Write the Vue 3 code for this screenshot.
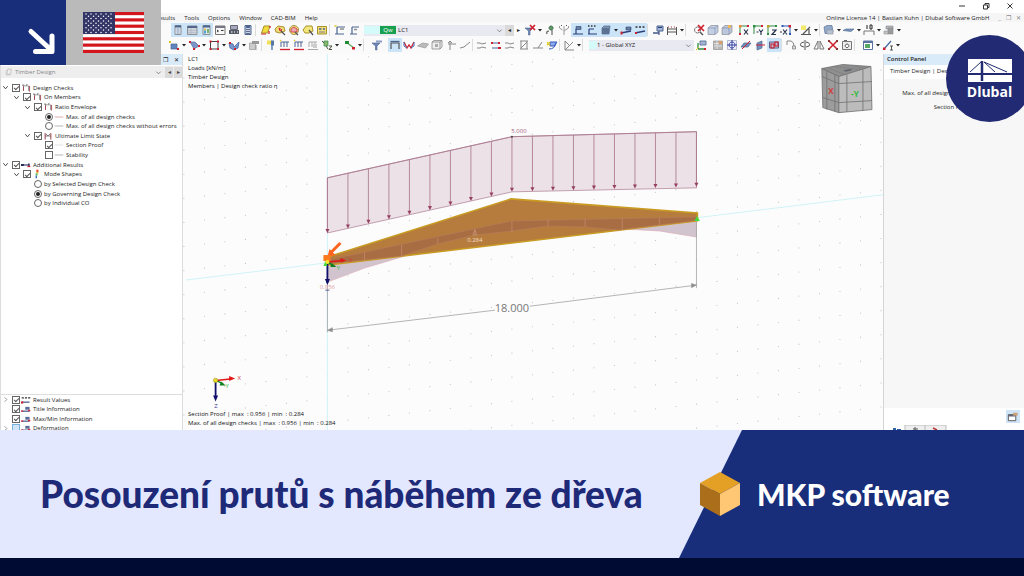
<script setup>
import { ref } from 'vue'

const B = '#4a6590'
const N = '#2b3f78'
const G = '#8b8f96'
const R = '#d02030'
const Y = '#f0dc3c'
const E = '#2f8f45'

// Each glyph is a list of [path, fill, stroke, stroke width] on a 14 x 14 grid.
const glyphs = {
  panel: [['M4 2.5h6v9H4z', '#e8edf4', G], ['M4 2.5h6v2H4z', B], ['M5.5 6h3M5.5 8h3M5.5 10h3', 'none', '#7d93b8']],
  table: [['M2.5 3h9.500v8.500h-9.500z', '#cfd4dc', G], ['M2.500 3h9.500v2h-9.500z', '#53658c'], ['M3 7.500h9M3 9.500h9M6 5v6', 'none', '#a9b0bd', .6]],
  palette: [['M4 2.5h7v9H4z', '#dfe8f2', G], ['M4 2.5h7v2H4z', B], ['M5 5.500h2v2H5z', '#e4c33c'], ['M5 7.500h2v3H5z', '#4ea1d8'], ['M8 6h2v4H8z', '#77b56c']],
  console: [['M2.500 3h9.500v8.500h-9.500z', '#f7f7f7', '#777'], ['M2.500 3h9.500v2h-9.500z', '#778'], ['M4 7l1.500 1L4 9M8 7.500h2.500', 'none', '#333']],
  printer: [['M3.500 2.500h7v4h-7z', '#a4a9bb', '#667'], ['M2 7h10v4H2z', '#555b66'], ['M4 9h1.500M7 9h1M10 9h1', 'none', '#fff']],
  calc: [['M4 2.500h6v9H4z', '#c9d3e4', B], ['M5 4h4', 'none', N, 1.500], ['M5 6.500h4M5 8.500h4M5 10.500h4', 'none', '#62708e']],
  surface: [['M5 3h6l-2.500 7H2.500z', Y, '#a9912b'], ['M2 11h5M10 8v3M11 3v2', 'none', R, 1.2]],
  region: [['M2 6l3-3 6 1 1 4-5 2-4-1z', '#f0df77', '#a9912b'], ['M6 5l3 2-2 1z', '#fff', R], ['M8 8l4 4', 'none', '#555', 1.300]],
  target: [['M7 2.500a4.500 4.500 0 1 0 .1 0z', '#f0df77', '#a58f52'], ['M4 6l3-2 3 2v3H4z', '#e7a9b3', R, .7], ['M8 9l3 3', 'none', '#555', 1.200]],
  lasso: [['M2 7l3-4h6l1 5-4 2H4z', '#f4e87c', '#a9912b'], ['M8 7l4 5', 'none', '#555', 1.300]],
  boxes: [['M2.500 3.500h9v7.500h-9z', '#f0df77', '#a9912b'], ['M4 5h2.500v2H4zM8 5h2v2H8zM4 8.500h6v1H4z', '#788094']],
  loadnew: [['M4 4h8M4 4v7M2 11h9', 'none', B, 1.200], ['M7 6h4', 'none', G, 1.500], ['M1.500 2l2 2M3.500 2l-2 2', 'none', '#e5c92f']],
  load: [['M5 4h7M5 4v7M3 11h7', 'none', B, 1.200], ['M7 6.500h3', 'none', G, 1.500]],
  filterx: [['M2 5h8L7 8v4H5.500V8z', '#6f86b8', B, .6], ['M7 2l5 5M12 2L7 7', 'none', R, 1.700]],
  person: [['M6 8q-3 0-2 3', 'none', '#555', 1.200], ['M8 3a2 2 0 1 0 .1 0z', '#5f9a68', '#44704e'], ['M9 7v5', 'none', '#667', 1.200]],
  branches: [['M2.500 3v2l3 2M7 3v9M11.500 3v2L7 8', 'none', '#999', 1], ['M4 2.500h1M9 2.500h1', 'none', '#555', 1.200]],
  result: [['M5 11V6M2 11h10', 'none', N, 1.200], ['M5 3.500h5v3H5z', '#68809e', N, .6]],
  values: [['M3 11h9M4 11V6M4 6h5', 'none', N, 1.200], ['M3 3h1.500M6 3h1.500M9 3h1.500', 'none', '#333', 1.500]],
  solid: [['M3 5l2-2h6l-1 8H3z', '#8196b0', B, .7], ['M3 5h7v6H3z', '#5c7292']],
  beam: [['M2 10l10-2', 'none', N, 1.500], ['M7 4h5v3H7z', '#68809e', N, .6], ['M1.500 8.500h2v3h-2z', R]],
  beamtext: [['M2 10l10-2', 'none', N, 1.400], ['M2.500 4h2M6 4h2M9.500 4h2', 'none', '#333', 1.500], ['M2 9h2v2H2z', R]],
  info: [['M2 10h6', 'none', N, 1.300], ['M6 3h6v5H6z', '#a6b6d6', B], ['M7 4.500h4M8 8v4', 'none', N]],
  frame: [['M2.500 4v8M11.500 4v8M2 6h10M2 9h10', 'none', '#555', 1], ['M3 4h1M6 4h1M9 4h1', 'none', '#a33']],
  searchx: [['M5.500 4a3 3 0 1 0 .1 0z', '#fff', '#777'], ['M8 9l3 3', 'none', '#555', 1.400], ['M6 2l6 6M12 2L6 8', 'none', R, 1.700]],
  cube: [['M2 5l3-2.500h7V9l-3 2.500H2z', '#c4cfe4', G, .7], ['M2 5h7v6.500M9 5l3-2.500', 'none', '#7f91b3', .7]],
  cubenew: [['M2 5l3-2.500h7V9l-3 2.500H2z', '#bdc7dc', G, .7], ['M2 5h7v6.500M9 5l3-2.500', 'none', '#7f91b3', .7], ['M8 2h3v3H8z', '#f0b75a']],
  viewx: [['M3 11V3h8', 'none', E, 1], ['M2 2h2.500v2.500H2z', '#f0852c'], ['M10 2h2v2h-2zM2 10h2v2H2z', R], ['M7 6.500l4 5M11 6.500l-4 5', 'none', '#26334a', 1.200]],
  viewy: [['M3 11V3h8', 'none', E, 1], ['M2 2h2.500v2.500H2z', E], ['M10 2h2v2h-2z', R], ['M5.500 9h2M8 6.500L10 9l2-2.500M10 9v3', 'none', '#26334a', 1.200]],
  viewz: [['M3 11V3h8', 'none', E, 1], ['M2 2h2.500v2.500H2z', '#c4a22a'], ['M10 2h2v2h-2zM2 10h2v2H2z', E], ['M7 7h4l-4 4.500h4', 'none', '#26334a', 1.200]],
  viewmx: [['M11 11V3H4', 'none', '#2a59b5', 1], ['M9.500 2H12v2.500H9.500z', R], ['M2.500 2h2v2h-2zM10 10h2v2h-2z', '#2a59b5'], ['M1 9h2M4 6.500l4 5M8 6.500l-4 5', 'none', '#26334a', 1.200]],
  axes: [['M2 2.500h5v4.500H2z', '#f3e96b'], ['M2 11.500h10M4 11l7-7M10 6v5', 'none', '#555', 1.200]],
  render: [['M2 4l3-1.500h5l1 6-2 2H3z', '#92a9c9', B, .6], ['M5 7h6v4H5z', '#b7c3d5', G, .6]],
  plate: [['M1 7.500l3-1.500h8L9 8.500z', '#7896bb', B, .6]],
  dim: [['M2 12V8h10v4', 'none', '#777', 1], ['M5 2v4M8 2h2v4H8z', 'none', '#222', 1]],
  gray: [['M4 3h7v3H4z', '#b6b6b6', G, .6], ['M6 5h5v6H6z', '#999', G, .6], ['M2 8h4v3H2z', '#c6c6c6', G, .6]],
  wand: [['M2 3l2 2M4 3L2 5', 'none', '#dfc21d', 1], ['M4 6h6v5H4z', '#6185c1', B, .7], ['M10 10h2v2h-2z', R]],
  nodes: [['M3 4h5l4 4-5 3z', '#7c94c8', B, .6], ['M2 3h2v2H2zM11 7h2v2h-2zM6 10h2v2H6z', R]],
  square: [['M3.500 3.500h7.500v7.500H3.500z', 'none', '#444', 1], ['M2.500 2.500h2v2h-2zM10 2.500h2v2h-2zM2.500 10h2v2h-2zM10 10h2v2h-2z', R]],
  curve: [['M2 5l4 1 1 3 5-5-1 6-4 2-4-2z', '#7896cb', '#4468a8', .8], ['M2 4h2v2H2zM7 10h2v2H7z', R]],
  copy: [['M2.500 5h6v6.500h-6z', '#ccc', '#999', .7], ['M5 3h7v3H5z', '#999'], ['M9 7v5', 'none', '#999']],
  pin: [['M8 5v7', 'none', '#4671b5', 1.300], ['M3 2.500h5v4H3z', '#f0df57'], ['M7 2.500h3v5H7z', '#5877a8']],
  fload: [['M3 4v5M6 4v5M9 4v5M3 4h8', 'none', B, 1], ['M2 11.500h10', 'none', R, 1.300], ['M2 2l1 1', 'none', '#dfc21d', 1.200]],
  gload: [['M3 4v5M6 4v5M9 4v5M3 4h8M2 11.500h10', 'none', '#aaa', 1], ['M7 6h4v4H7z', '#ccc']],
  elf: [['M4 3h4v5H4z', '#8cb66e', E, .7], ['M2 3l2 2M6 8l2 3M9 8h3l-3 3.500h3', 'none', '#48533d', 1]],
  pins: [['M3 4l8 6', 'none', '#57a35c', 1.200], ['M2 3h4v3H2z', '#228c35'], ['M9 9h3v2.500H9z', R]],
  filter: [['M2 5h8L7 8v4H5.500V8z', '#6f86b8', B, .6], ['M6 2.500h6v2H6z', '#8c9fc3']],
  member: [['M3 11V5h8v6', 'none', '#555', 1.200], ['M2.500 3.500h9', 'none', B, 1.300]],
  moment: [['M2 4l3 6 2-3 2 3 3-6', 'none', R, 1.300], ['M2 4v4l3 2M12 4v4l-3 2', 'none', '#4370b8', 1]],
  gsurf: [['M1.500 8l5-3 6 1-3 4z', '#bbb', '#999', .7]],
  gcube: [['M2 4h8v7H2zM2 4l2-1.500h8V9l-2 2M10 4l2-1.500', '#eee', '#888', .8], ['M5 6h3v3H5z', '#aaa']],
  gmove: [['M4 6h8M6 3v9M4 5l2-2 2 2', 'none', '#888', 1]],
  gline: [['M2 10l4-1 6-5', 'none', '#888', 1]],
  wave: [['M2 5h3l2 1 4-1M2 10h3l2-1 4 1', 'none', '#888', 1]],
  wavered: [['M2 5h8M3 10h9', 'none', '#4b65a0', 1.200], ['M2 4h2v2H2zM9 9h3v2H9zM9 4h2v2H9z', R]],
  diag: [['M3 3h8M3 11h8M4 3v8M10 3v8M4 10l6-6', 'none', '#888', 1]],
  steps: [['M2 10h5l4-6M7 10h5', 'none', '#888', 1]],
  brush: [['M5 4h7l-3 4H5z', '#8caaf0', '#3559bd', 1], ['M2 4l3 4M2 7l3-3', 'none', '#e1c91d', 1.200], ['M4 11q6 0 7-6', 'none', '#3559bd', 1]],
  cut: [['M3 3v9h9M3 12l8-8M3 3l5 5', 'none', '#888', 1]],
  gaxis: [['M4 11V5M4 11h8', 'none', E, 1.300], ['M6 3h6v4H6z', '#a6b6d6', B, .8], ['M10 10h2v2h-2z', R], ['M2 12l3-3', 'none', '#e1c91d', 1]],
  sheet: [['M2.500 3h9v8.500h-9z', '#b7b7b7', '#888', .6], ['M3 5.500h8M3 8h8M6 3v8', 'none', '#eee', .7], ['M8 3h3v3H8z', '#dc9d69']],
  snap: [['M2.500 2.500h9v9h-9z', '#eef', '#9aa0bd', .7], ['M7 4a3 3 0 1 0 .1 0zM7 2v10M2 7h10', 'none', '#38479d', 1]],
  plane: [['M2 9l3-4h7l-3 4z', '#7291bc', B, .7], ['M3 11l8-8', 'none', R, 1]],
  planev: [['M4 5l5-2v7l-5 2z', '#7291bc', B, .7], ['M3 7h9', 'none', R, 1]],
  planes: [['M2.500 4h9v6h-9z', '#b7bdd6', '#5a5f91', 1], ['M4 6h3v4H4zM8 4h3v4H8z', 'none', R, 1.100]],
  rotate: [['M3 7V3h4q3 1 3 5', 'none', '#888', 1], ['M8.500 8h3v3h-3z', '#ddd', '#777', .7]],
  mirror: [['M6 4Q1 5 3 8l3 1M8 4q5 1 3 4L8 9M7 2v10', 'none', '#555', 1]],
  mountain: [['M6 3v8H2zM8 3v8h4z', 'none', '#777', 1]],
  cross: [['M3 3l8 8M11 3l-8 8', 'none', R, 1.500], ['M2 2h2v2H2zM10 2h2v2h-2zM2 10h2v2H2zM10 10h2v2h-2z', '#833']],
  camera: [['M2.500 3.500h9v8h-9z', '#eee', '#777', 1], ['M7 6a1.800 1.800 0 1 0 .1 0z', '#fff', '#555', 1], ['M4 2.500h3', 'none', '#666', 1]],
  window: [['M2.500 3h9v8.500h-9z', '#fff', '#5a72a2', 1], ['M2.500 3h9v2h-9z', '#5a72a2'], ['M4 6h5v4H4z', '#59a765']],
  section: [['M3 11l7-8', 'none', '#4065a0', 1.200], ['M2 9.500h2.500V12H2z', R], ['M9 8h3M10.500 8v4M9 12h3', 'none', '#333', .8]],
  // Tree and panel glyphs
  portal: [['M3.500 11V4h7v7', 'none', '#777', 1], ['M3.500 5v6M12 4v8', 'none', '#a23a4a', 1.200], ['M1.500 3h3M7 3l2-1', 'none', '#333', 1]],
  limit: [['M3 3v9M11 3v9', 'none', '#a23a4a', 1.400], ['M3 7h8M4 4l3 3 3-3', 'none', '#555', 1]],
  redline: [['M1 7h12', 'none', '#d08a8e', 1]],
  grayline: [['M1 7h12', 'none', '#9a9a9a', 1]],
  paleline: [['M1 7h12', 'none', '#d5d5d5', 1]],
  addres: [['M2 7h10', 'none', '#222a5c', 1.500], ['M0 5.500h4v3H0zM10 5v3h2V5z', '#222a5c'], ['M9 8h4v2H9z', R]],
  mode: [['M6 1h3v4H6z', '#e5483b'], ['M6 4h3v2H6z', '#eacb34'], ['M5 6h3v3H5z', '#5fbb60'], ['M5 9h2v4H5z', '#3f70c0']],
  resval: [['M1 10h11', 'none', N, 1.500], ['M1 4h3M5.500 4h3M10 4h3', 'none', '#333', 1.700], ['M0 9h3v3H0z', R]],
  titleinf: [['M1 10h11', 'none', N, 1.500], ['M6 4h6v4H6z', '#5b6c96'], ['M10 8h3v2h-3zM0 9h3v2H0z', R]],
  tabbox: [['M2 5h8v6.500H2z', '#fff', '#555', 1], ['M2 5h8v2H2z', '#667'], ['M7 3h5v3H7z', '#c9a27a']],
  sheetstack: [['M5 2h6l-1 9H3z', '#eee', '#aaa', 1], ['M3 4h-1v8h7', 'none', '#bbb', 1]]
}

const i = (g, o = {}) => ({ k: 'icon', g, ...o })
const d = (g, o = {}) => ({ k: 'icon', g, drop: true, ...o })
const sp = (size, line = false) => ({ k: 'sep', size, line })

const row1 = [
  i('panel', { on: 1 }), i('table', { on: 1 }), i('palette', { on: 1 }), i('console'), i('printer'), i('calc'), sp('m', true),
  i('surface'), i('region'), i('target'), i('lasso'), i('boxes'), sp('m', true), i('loadnew'), i('load'), sp('s'),
  { k: 'loadcase' }, d('filterx'), i('person'), i('branches'),
  i('result', { on: 1 }), i('values', { on: 1 }), d('solid', { on: 1 }), i('beam', { on: 1 }), i('beamtext', { on: 1 }), sp('m', true),
  i('info'), d('frame'), sp('l', true), i('searchx'), i('cube'), i('cubenew'), sp('s'),
  i('viewx'), i('viewy'), i('viewz'), d('viewmx'), d('axes'), sp('s', true), d('render'), d('plate'), d('dim'), d('gray')
]
const row2 = [
  d('wand'), d('nodes'), d('square'), d('curve'), i('copy'), sp('s', true), i('pin'), i('fload'), i('fload'), i('gload'), d('elf'), sp('s'), d('pins'),
  sp('l', true), i('filter'), sp('m'), i('member', { on: 1 }), i('moment'), i('gsurf'), i('gcube'), i('gmove'), i('gline'), sp('s', true),
  i('wave'), i('wavered'), i('wave'), i('diag'), i('steps'), i('brush'), sp('s', true), d('cut'), sp('l', true),
  { k: 'system' }, i('gaxis'), sp('s'), i('sheet'), i('snap'), i('plane'), i('planev'), i('planes', { on: 1 }), sp('s', true),
  i('rotate'), i('mirror'), i('mountain'), i('cross'), i('camera'), sp('l', true), d('window'), d('section')
]

const tree = ref([
  { l: 0, t: 'Design Checks', g: 'portal', open: 1, on: true },
  { l: 1, t: 'On Members', g: 'portal', open: 1, on: true },
  { l: 2, t: 'Ratio Envelope', g: 'portal', open: 1, on: true },
  { l: 3, t: 'Max. of all design checks', g: 'redline', radio: 'ratio', on: true },
  { l: 3, t: 'Max. of all design checks without errors', g: 'grayline', radio: 'ratio', on: false },
  { l: 2, t: 'Ultimate Limit State', g: 'limit', open: 1, on: true },
  { l: 3, t: 'Section Proof', g: 'paleline', on: true },
  { l: 3, t: 'Stability', g: 'grayline', on: false },
  { l: 0, t: 'Additional Results', g: 'addres', open: 1, on: true },
  { l: 1, t: 'Mode Shapes', g: 'mode', open: 1, on: true },
  { l: 2, t: 'by Selected Design Check', radio: 'mode', on: false },
  { l: 2, t: 'by Governing Design Check', radio: 'mode', on: true },
  { l: 2, t: 'by Individual CO', radio: 'mode', on: false }
])
const options = ref([
  { l: 0, t: 'Result Values', g: 'resval', closed: 1, on: true },
  { l: 0, t: 'Title Information', g: 'titleinf', on: true },
  { l: 0, t: 'Max/Min Information', g: 'titleinf', on: true },
  { l: 0, t: 'Deformation', g: 'titleinf', closed: 1, on: false, hot: 1 }
])
const groups = [{ id: 'tree', rows: tree }, { id: 'options', rows: options }]

// Model geometry on the drawing canvas
const x0 = 328
const step = 184 / 9
const arrows = Array.from({ length: 19 }, (_, n) => {
  const left = n <= 9
  const top = left ? 178 - (n * 41) / 9 : 137 - ((n - 9) * 5) / 9
  return { x: x0 + n * step, top, bottom: top + 55 }
})
const dots = []
for (let c = -7; c < 28; c++) {
  for (let r = -14; r < 12; r++) {
    const x = x0 + c * step
    const y = 374 - 0.115 * (x - x0) + r * 24
    if (y > 56 && y < 430) dots.push({ x, y })
  }
}
const stripes = [0, 1, 2, 3, 4, 5, 6]
const stars = []
for (let r = 0; r < 9; r++) for (let c = 0; c < (r % 2 ? 5 : 6); c++) stars.push({ x: 3 + c * 5 + (r % 2 ? 2.5 : 0), y: 2 + r * 2.3 })
</script>

<template>
  <div class="page">
    <section class="app">
      <header class="titlebar">
        <button aria-label="Minimize"><svg viewBox="0 0 8 8"><path d="M1 4h6" /></svg></button>
        <button aria-label="Restore"><svg viewBox="0 0 8 8"><path d="M1.500 3h4v4h-4zM3 3V1.500h4v4H5.500" /></svg></button>
        <button aria-label="Close"><svg viewBox="0 0 8 8"><path d="M1.500 1.500l5 5M6.500 1.500l-5 5" /></svg></button>
      </header>
      <nav class="menubar">
        <a v-for="m in ['Results', 'Tools', 'Options', 'Window', 'CAD-BIM', 'Help']" :key="m" href="#">{{ m }}</a>
        <span class="license">Online License 14 | Bastian Kuhn | Dlubal Software GmbH</span>
        <span class="mdi"><i>_</i><i>❐</i><i>✕</i></span>
      </nav>
      <div v-for="(row, ri) in [row1, row2]" :key="ri" class="toolbar" :class="'row' + (ri + 1)">
        <template v-for="(it, n) in row" :key="n">
          <span v-if="it.k === 'sep'" class="sep" :class="[it.size, { line: it.line }]"></span>
          <span v-else-if="it.k === 'loadcase'" class="loadcase">
            <span class="combo">
              <span class="swatch"></span><span class="qw">Qw</span>
              <select aria-label="Load case"><option>LC1</option></select>
              <svg class="chev" viewBox="0 0 8 8"><path d="M1.500 3l2.500 2.500L6.500 3" /></svg>
            </span>
            <button class="step off" aria-label="Previous load case">◂</button>
            <button class="step" aria-label="Next load case">▸</button>
          </span>
          <span v-else-if="it.k === 'system'" class="combo system">
            <span class="swatch"></span>
            <select aria-label="Coordinate system"><option>1 - Global XYZ</option></select>
            <svg class="chev" viewBox="0 0 8 8"><path d="M1.500 3l2.500 2.500L6.500 3" /></svg>
          </span>
          <button v-else class="tool" :class="{ on: it.on, drop: it.drop }" :aria-label="it.g">
            <svg class="glyph" viewBox="0 0 14 14">
              <path v-for="(p, k) in glyphs[it.g]" :key="k" :d="p[0]" :fill="p[1]" :stroke="p[2] || 'none'" :stroke-width="p[3] || 1" />
            </svg>
            <svg v-if="it.drop" class="caret" viewBox="0 0 6 6"><path d="M1 2h4L3 4.500z" /></svg>
          </button>
        </template>
      </div>

      <div class="work">
        <aside class="navigator">
          <div class="paneltop"><i>❐</i><i>✕</i></div>
          <div class="picker">
            <svg class="glyph small" viewBox="0 0 14 14"><path v-for="(p, k) in glyphs.sheetstack" :key="k" :d="p[0]" :fill="p[1]" :stroke="p[2]" /></svg>
            <select aria-label="Navigator content"><option>Timber Design</option></select>
            <svg class="chev" viewBox="0 0 8 8"><path d="M1.500 3l2.500 2.500L6.500 3" /></svg>
            <button class="step off" aria-label="Previous">◂</button>
            <button class="step off" aria-label="Next">▸</button>
          </div>
          <ul v-for="grp in groups" :key="grp.id" :class="grp.id">
            <li v-for="r in grp.rows.value" :key="r.t" :class="'lv' + r.l">
              <span class="twist">
                <svg v-if="r.open" viewBox="0 0 8 8"><path d="M1.500 2.500L4 5.500l2.500-3" /></svg>
                <svg v-else-if="r.closed" class="pale" viewBox="0 0 8 8"><path d="M3 1.500L5.500 4 3 6.500" /></svg>
              </span>
              <label>
                <input v-if="r.radio" type="radio" :name="r.radio" :checked="r.on" />
                <input v-else v-model="r.on" type="checkbox" :class="{ hot: r.hot }" />
                <svg v-if="r.g" class="glyph mini" viewBox="0 0 14 14">
                  <path v-for="(p, k) in glyphs[r.g]" :key="k" :d="p[0]" :fill="p[1]" :stroke="p[2] || 'none'" :stroke-width="p[3] || 1" />
                </svg>
                <span>{{ r.t }}</span>
              </label>
            </li>
          </ul>
        </aside>

        <main class="canvas">
          <svg class="model" viewBox="184 54 698 376" preserveAspectRatio="xMidYMid slice">
            <g class="dots"><circle v-for="(p, k) in dots" :key="k" :cx="p.x" :cy="p.y" r=".6" /></g>
            <path class="guide" d="M328 54V430M187 280L882 195" />
            <path d="M328 178L512 137L696 132V188L512 192L328 233z" fill="#ece1e7" stroke="#b58a9c" stroke-width=".8" />
            <path d="M328 178L512 137L696 132" fill="none" stroke="#a9788c" stroke-width=".8" />
            <g v-for="(a, k) in arrows" :key="k">
              <path :d="`M${a.x} ${a.top}V${a.bottom - 3}`" stroke="#a87389" stroke-width=".8" />
              <path :d="`M${a.x - 2} ${a.bottom - 4}h4l-2 4z`" fill="#96405f" />
            </g>
            <circle cx="512" cy="137" r="1" fill="#444" />
            <path d="M328 260L328 282L365 268L402 257L438 244L475 235L512 231L548 226L585 227L622 229L659 231L696 237V217L512 221z" fill="#d2c4ce" stroke="#d9a9b1" stroke-width=".6" />
            <path d="M328 257L511 199L697 213V221L328 265z" fill="#b57c3e" stroke="#c99b22" stroke-width="1.500" />
            <path d="M328 260L512 221L696 217V220.500L618 230L585 227L548 226L512 231L475 235L438 244L402 256L328 264z" fill="#a96d43" stroke="#b87d5c" stroke-width=".6" />
            <path d="M365 252v8M402 245v12M438 238v6M475 229v6M512 221v12M548 220v6M585 219v8M622 218v11M659 218v7" stroke="#c58c72" stroke-width=".7" />
            <path d="M473 235l2-5 2 5z" fill="none" stroke="#cf9c80" stroke-width=".6" />
            <path d="M694 221l2.500-5 3 5z" fill="#45d83d" />
            <g class="dim">
              <path d="M328 268V332M696 221V288M328 330L495 310M530 306L696 285" />
              <path d="M328 330l5-2.500v4zM696 285l-5-1.500v4z" fill="#888" />
            </g>
            <text class="dimtext" x="512" y="312">18.000</text>
            <text class="val" x="519" y="133">5.000</text>
            <text class="val light" x="475" y="242">0.284</text>
            <text class="val pink" x="328" y="289">0.956</text>
            <path d="M341 243L331 253" stroke="#ff641e" stroke-width="3" />
            <path d="M328 257l2-8 6 6z" fill="#ff641e" />
            <path d="M324 255h7v6h-7z" fill="#ff7a1e" />
            <path d="M328 262V283" stroke="#10106c" stroke-width="1.800" /><path d="M325.500 279h5l-2.500 6z" fill="#10106c" />
            <path d="M328 262L344 260.500" stroke="#e01818" stroke-width="1.500" /><path d="M341 258l6 2.500-6 2z" fill="#e01818" />
            <path d="M328 262L335 266" stroke="#108020" stroke-width="1.500" /><path d="M332 263l5 4-6 0z" fill="#108020" />
            <path d="M324 266l2-5 2 5z" fill="#45d83d" /><circle cx="328" cy="262" r="2" fill="#f4e62c" />
            <path d="M326 290h4" stroke="#5a5a95" />
            <text class="ax red" x="351" y="262">X</text><text class="ax green" x="339" y="270">Y</text>

            <path d="M216.500 380V397" stroke="#10106c" stroke-width="1.800" /><path d="M214 395h5l-2.500 6z" fill="#10106c" />
            <path d="M217 380L231 378.500" stroke="#e01818" stroke-width="1.500" /><path d="M230 375.500l6 2.500-6 2.500z" fill="#e01818" />
            <path d="M217 380L224 383.500" stroke="#108020" stroke-width="1.500" /><path d="M222 381l4.500 4h-6z" fill="#108020" />
            <circle cx="216.500" cy="380" r="2.200" fill="#e8dc28" stroke="#8c8714" stroke-width=".5" />
            <text class="ax red" x="240" y="380">X</text><text class="ax green" x="228" y="388">Y</text><text class="ax blue" x="217" y="408">Z</text>

            <g stroke="#707070" stroke-width=".8" stroke-linejoin="round">
              <path d="M821 69L842 65L870 67L838 77z" fill="#8f8f8f" />
              <path d="M821 69L838 77V113L822 108z" fill="#9c9c9c" />
              <path d="M838 77L870 67L871 110L838 113z" fill="#bcbcbc" />
              <path d="M826 72V110M834 75V112M821 77L838 84L871 82M822 98L838 103L871 101M846 75V112M862 70V111" fill="none" />
              <path d="M826 68L844 75M831 67L862 70M850 66L865 69" fill="none" stroke="#777" stroke-width=".5" />
              <path d="M842 71l7-1.500 3 1-7 1.800z" fill="#60666c" stroke="none" />
            </g>
            <text class="face red" x="830" y="94">X</text><text class="face green" x="854" y="97">-Y</text>
          </svg>
          <div class="legend top">
            <p>LC1</p><p>Loads [kN/m]</p><p>Timber Design</p><p>Members | Design check ratio η</p>
          </div>
          <div class="legend bottom">
            <p>Section Proof | max&nbsp; : 0.956 | min&nbsp; : 0.284</p>
            <p>Max. of all design checks | max&nbsp; : 0.956 | min&nbsp; : 0.284</p>
          </div>
        </main>

        <aside class="control">
          <h2>Control Panel</h2>
          <p class="subject">Timber Design | Design Check</p>
          <div class="body"><p>Max. of all design checks</p><p>Section Proof</p></div>
          <div class="tools">
            <button aria-label="Panel options">
              <svg class="glyph" viewBox="0 0 14 14"><path v-for="(p, k) in glyphs.tabbox" :key="k" :d="p[0]" :fill="p[1]" :stroke="p[2] || 'none'" /></svg>
            </button>
          </div>
          <div class="tabs">
            <svg viewBox="0 0 64 5"><path d="M17 5V0H58V5M37 0V5" fill="#eee" stroke="#bbb" /><path d="M5 4h3M9 5h4" stroke="#2b62a5" stroke-width="2" /><path d="M25 4h5M27 2v3" stroke="#555" /><path d="M45 3l4 2" stroke="#b33" stroke-width="1.500" /></svg>
          </div>
        </aside>
      </div>

      <div class="badges">
        <div class="arrow"><svg viewBox="0 0 65 65"><path d="M31 31.500L50 49M35.500 51.500H52V36" /></svg></div>
        <div class="flagbox">
          <svg viewBox="0 0 61 41" preserveAspectRatio="none" role="img" aria-label="United States flag">
            <path d="M0 0h61v41H0z" fill="#fff" />
            <rect v-for="s in stripes" :key="s" x="0" :y="s * 6.308" width="61" height="3.154" fill="#d3151e" />
            <path d="M0 0h32v22H0z" fill="#333566" />
            <circle v-for="(s, k) in stars" :key="k" :cx="s.x" :cy="s.y" r=".75" fill="#fff" />
          </svg>
        </div>
      </div>
      <div class="dlubal">
        <svg viewBox="0 0 44 24">
          <path d="M0 0h44v14H0zM0 16h44v7H0z" fill="#fff" />
          <path d="M14 2v20" stroke="#212a72" stroke-width="2.500" /><path d="M2 13L13 3M16 3l11 10M16 3l23 10" fill="none" stroke="#212a72" />
        </svg>
        <span>Dlubal</span>
      </div>
    </section>

    <footer class="banner">
      <h1>Posouzení prutů s náběhem ze dřeva</h1>
      <div class="brand">
        <svg viewBox="0 0 40 44">
          <path d="M20 0L40 11L20 22L0 11z" fill="#e4a024" /><path d="M0 11L20 22V44L0 33z" fill="#ab6e1a" /><path d="M40 11L20 22V44L40 33z" fill="#ffc673" />
        </svg>
        <span>MKP software</span>
      </div>
    </footer>
    <div class="strip"></div>
  </div>
</template>

<style>
body { margin: 0; }
</style>

<style scoped>
.page { height: 100vh; min-height: 320px; display: flex; flex-direction: column; overflow: hidden; background: #fff; color: #222; font: 6px/10px "Open Sans", "Noto Sans", sans-serif; }
.page * { box-sizing: border-box; }
button, select { font: inherit; color: inherit; border: 0; padding: 0; margin: 0; background: none; appearance: none; }
select { flex: 1; min-width: 0; outline: 0; }
p, h1, h2, ul { margin: 0; padding: 0; }
i { font-style: normal; }
svg { display: block; }

.app { position: relative; flex: 1; min-height: 0; display: flex; flex-direction: column; overflow: hidden; background: #f7f7f8; }
.titlebar { display: flex; justify-content: flex-end; gap: 16px; height: 13px; padding: 1px 10px 2px; background: #fff; }
.titlebar svg { width: 8px; height: 8px; fill: none; stroke: #333; }
.menubar { display: flex; align-items: center; gap: 9px; height: 9px; padding: 0 3px 0 155px; background: #f5f5f6; }
.menubar a { color: #222; text-decoration: none; }
.license { margin-left: auto; }
.mdi { display: flex; gap: 5px; color: #888; }
.toolbar { display: flex; align-items: center; height: 16px; background: #fafafa; }
.row1 { padding-left: 171px; }
.row2 { padding: 0 0 2px 167px; }
.tool { display: flex; align-items: center; flex: none; width: 14px; height: 14px; }
.tool.drop { width: 20px; }
.on { background: #cbe4f7; }
.glyph { flex: none; width: 14px; height: 14px; }
.caret { width: 6px; height: 6px; fill: #222; }
.sep { flex: none; height: 12px; }
.sep.s { width: 3px; }
.sep.m { width: 4px; }
.sep.l { width: 7px; }
.sep.line { border-left: 1px solid #dcdcdc; }
.combo { display: flex; align-items: center; height: 11px; background: #e9e9f2; }
.loadcase { flex: none; display: flex; width: 159px; height: 11px; }
.loadcase .combo { flex: 1; }
.system { flex: none; width: 105px; }
.swatch { width: 16px; height: 8px; background: #d5fafa; }
.system .swatch { width: 8px; }
.qw { width: 16px; margin-right: 2px; background: #16a050; color: #fff; text-align: center; line-height: 8px; }
.chev { flex: none; width: 7px; height: 7px; margin: 0 2px; fill: none; stroke: #777; }
.step { width: 9px; height: 11px; text-align: center; }
.step.off { background: #dadada; }

.work { flex: 1; min-height: 0; display: flex; background: #fff; }
.navigator { flex: none; width: 183px; display: flex; flex-direction: column; border: solid #dcdcdf; border-width: 0 1px; background: #fff; overflow: hidden; }
.paneltop { flex: none; display: flex; justify-content: flex-end; align-items: center; gap: 6px; height: 11px; padding-right: 3px; background: #d9eaf8; }
.picker { flex: none; display: flex; align-items: center; height: 12px; margin-top: 1px; padding-left: 4px; background: #eeeeee; color: #888; }
.picker .step { border-left: 1px solid #eee; color: #444; }
.glyph.small { width: 8px; height: 8px; margin-right: 2px; }
ul { list-style: none; display: grid; grid-auto-rows: 1fr; }
.tree { flex: none; height: 125px; margin-top: 5px; }
.options { flex: none; height: 39px; margin-top: auto; margin-bottom: -3px; border-top: 1px solid #ddd; }
li { display: flex; align-items: center; min-height: 0; }
label { display: flex; align-items: center; height: 9px; white-space: nowrap; }
.lv1 { padding-left: 11px; }
.lv2 { padding-left: 22px; }
.lv3 { padding-left: 33px; }
.twist { flex: none; width: 10px; padding-left: 1px; }
.twist svg { width: 7px; height: 7px; fill: none; stroke: #333; }
.twist .pale { stroke: #888; }
input { appearance: none; flex: none; display: grid; place-items: center; width: 8px; height: 8px; margin: 0 1px; border: 1px solid #666; background: #fff; }
input[type="radio"] { border-radius: 50%; }
.lv2 input[type="radio"] { margin-right: 2px; }
input[type="radio"]:checked::after { content: ""; width: 4px; height: 4px; border-radius: 50%; background: #222; }
input[type="checkbox"]:checked::after { content: ""; width: 4px; height: 2px; border: solid #555; border-width: 0 0 1px 1px; rotate: -45deg; }
input.hot { border-color: #7ab0dc; background: #cfe6fa; }
.glyph.mini { width: 10px; height: 10px; margin-right: 2px; }

.canvas { position: relative; flex: 1; min-width: 0; background: #fcfcfd; overflow: hidden; }
.model { position: absolute; inset: 0; width: 100%; height: 100%; }
.dots { fill: #c4c4c4; }
.guide { fill: none; stroke: #d0f3f6; stroke-width: 1; }
.dim { fill: none; stroke: #a2a2a2; stroke-width: .8; }
text { text-anchor: middle; }
.dimtext { font-size: 11px; fill: #777; }
.val { font-size: 6px; fill: #a35b75; }
.val.light { fill: #f6dccb; }
.val.pink { fill: #e39da0; }
.ax { font-size: 6px; }
.face { font-size: 8px; font-weight: 700; }
.red { fill: #d23a3a; }
.green { fill: #2fbb3a; }
.blue { fill: #34348c; }
.legend { position: absolute; left: 5px; line-height: 9px; white-space: nowrap; color: #111; }
.legend.top { top: 1px; }
.legend.bottom { bottom: 2px; }

.control { flex: none; width: 141px; display: flex; flex-direction: column; border-left: 1px solid #d5d5d8; background: #f7f7f7; }
h2 { height: 11px; padding-left: 3px; background: #d9eaf8; font: 600 6px/10px "Open Sans", sans-serif; }
.subject { height: 14px; padding: 1px 6px; background: #fff; }
.body { flex: 1; padding: 7px 53px 0 0; text-align: right; line-height: 14px; white-space: nowrap; }
.tools { display: flex; justify-content: flex-end; height: 17px; padding: 2px 4px; background: #fff; }
.tools button { width: 14px; height: 13px; background: #cfe4f6; }
.tools .glyph { height: 13px; }
.tabs { height: 5px; padding-left: 4px; background: #fff; }
.tabs svg { width: 64px; height: 5px; }

.badges { position: absolute; left: 0; top: 0; display: flex; height: 65px; }
.arrow { width: 66px; background: #182e7a; }
.arrow svg { width: 65px; height: 65px; fill: none; stroke: #fff; stroke-width: 5; stroke-linecap: round; stroke-linejoin: round; }
.flagbox { width: 95px; padding: 12px 17px; background: #bababa; }
.flagbox svg { width: 61px; height: 41px; }
.dlubal { position: absolute; right: -9px; top: 35px; width: 87px; height: 87px; padding-top: 24px; border-radius: 50%; background: #212a72; color: #fff; text-align: center; }
.dlubal svg { width: 44px; height: 24px; margin: 0 auto; }
.dlubal span { font: 700 14px/18px "Open Sans", sans-serif; }

.banner { flex: none; display: flex; align-items: center; height: 128px; background: #e3e8ff; overflow: hidden; }
h1 { flex: 1; padding-left: 40px; color: #1e2a78; font: 900 37px/48px Lato, sans-serif; white-space: nowrap; }
.brand { position: relative; flex: none; display: flex; align-items: center; gap: 17px; width: 345px; height: 100%; padding-left: 21px; }
.brand::before { content: ""; position: absolute; inset: 0; background: #182e7a; clip-path: polygon(63px 0, 100% 0, 100% 100%, 0 100%); }
.brand svg { position: relative; width: 40px; height: 44px; }
.brand span { position: relative; color: #fff; font: 900 30px/36px Lato, sans-serif; white-space: nowrap; }
.strip { flex: none; height: 18px; background: #000b34; }
</style>
